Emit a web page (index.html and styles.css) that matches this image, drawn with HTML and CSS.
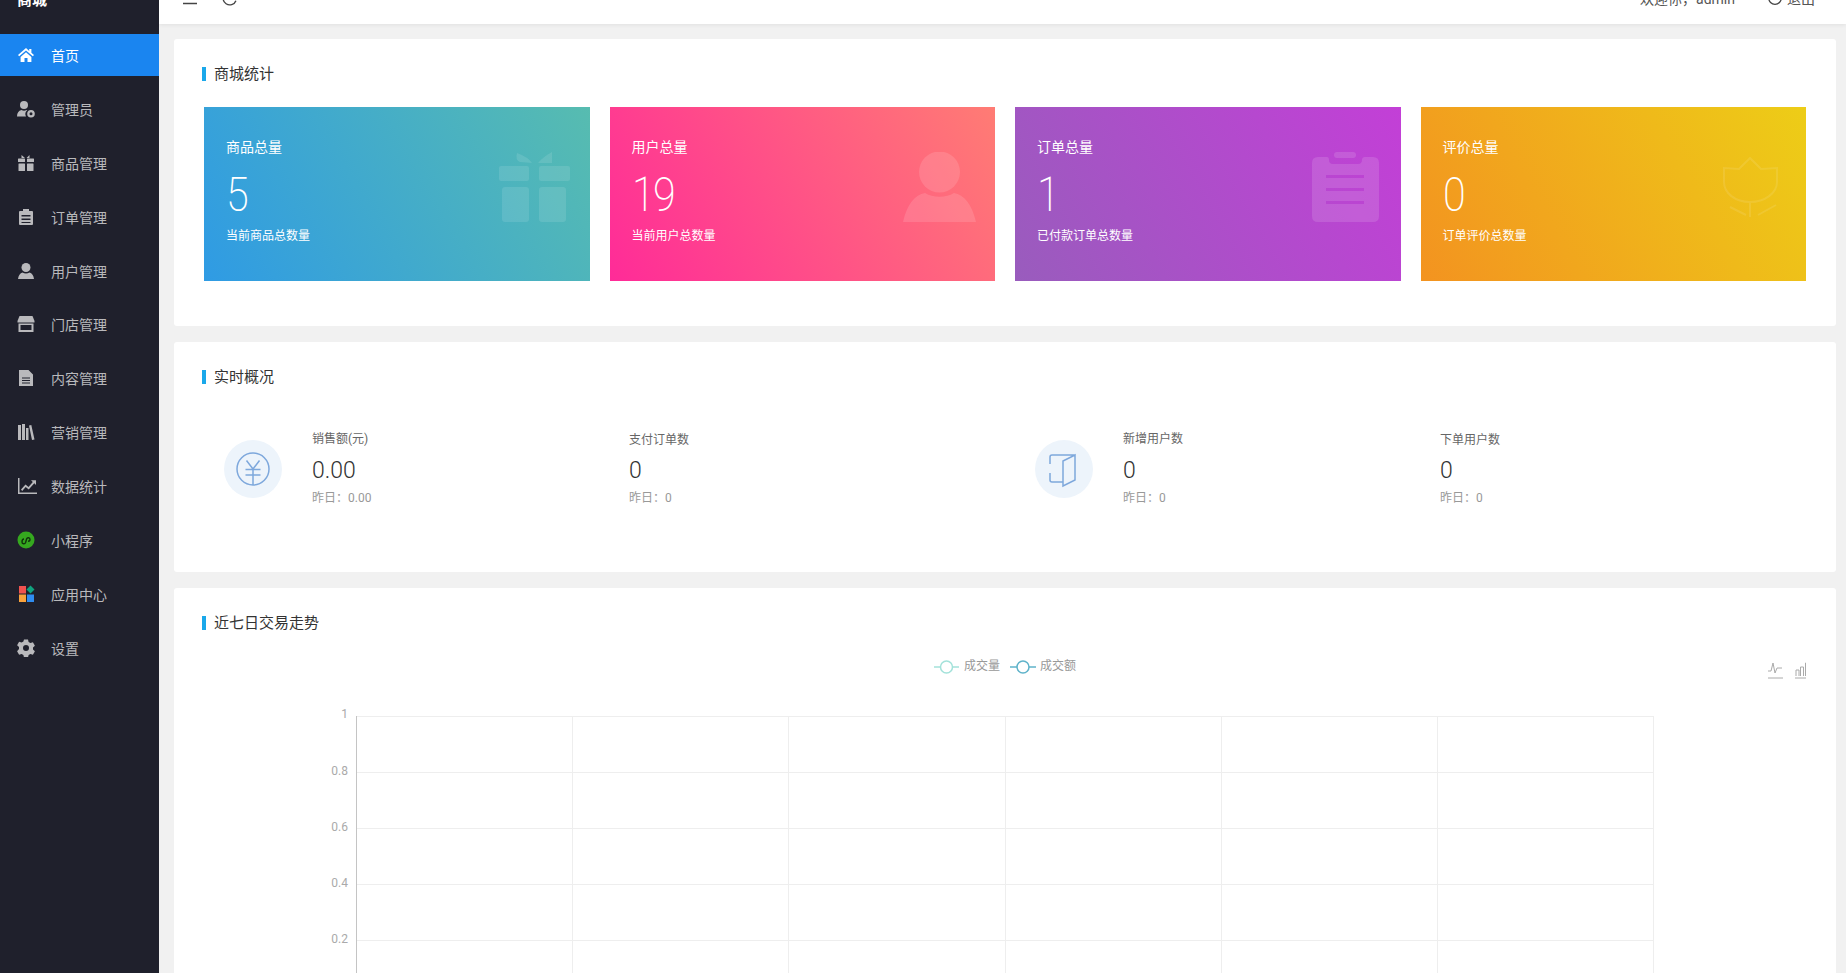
FILE: index.html
```html
<!DOCTYPE html>
<html lang="en">
<head>
  <meta charset="UTF-8">
  <meta name="viewport" content="width=device-width, initial-scale=1.0">
  <title>商城</title>
  <link rel="stylesheet" href="styles.css">
</head>
<body>
  <div class="layout">
    <!-- 侧边栏 -->
    <aside class="sidebar">
      <div class="logo">商城</div>
      <ul class="menu">
        <li class="active">
          <span class="menu-icon"><svg width="18" height="18" viewBox="0 0 18 18"><path d="M9 2 1 9l1.2 1.3L9 4.5l6.8 5.8L17 9l-2.6-2.2V3h-2.2v1.9z"/><path d="M3.6 11 9 6.3l5.4 4.7V16h-3.9v-4h-3v4H3.6z"/></svg></span>
          首页
        </li>
        <li>
          <span class="menu-icon"><svg width="18" height="18" viewBox="0 0 18 18"><circle cx="7" cy="5" r="4"/><path d="M0 16.500c0-3.500 1.500-6 4.500-6.500 1.500 1 3.500 1 5 0l.8.300A5 5 0 0 0 9 16.500z"/><path fill-rule="evenodd" d="M14 10a3.800 3.800 0 1 1 0 7.600 3.800 3.800 0 0 1 0-7.600zm0 2.300a1.500 1.500 0 1 0 0 3 1.500 1.500 0 0 0 0-3z"/></svg></span>
          管理员
        </li>
        <li>
          <span class="menu-icon"><svg width="18" height="18" viewBox="0 0 18 18"><path d="M4.500 1l3.500 3H4.500zM12.500 1L9.500 4h3z"/><rect x="1" y="4.500" width="7" height="3.500" rx=".5"/><rect x="10" y="4.500" width="7" height="3.500" rx=".5"/><rect x="1.500" y="9.500" width="6.500" height="7.500" rx=".5"/><rect x="10" y="9.500" width="6.500" height="7.500" rx=".5"/></svg></span>
          商品管理
        </li>
        <li>
          <span class="menu-icon"><svg width="18" height="18" viewBox="0 0 18 18"><path fill-rule="evenodd" d="M6 1h6v2h3a1 1 0 0 1 1 1v12a1 1 0 0 1-1 1H3a1 1 0 0 1-1-1V4a1 1 0 0 1 1-1h3zM4.500 7v1.500h9V7zm0 3.500V12h9v-1.500zm0 3.500v1h9v-1z"/></svg></span>
          订单管理
        </li>
        <li>
          <span class="menu-icon"><svg width="18" height="18" viewBox="0 0 18 18"><circle cx="9" cy="5.500" r="4.500"/><path d="M1 17c.5-3.500 2-6 4.500-6.500 2 1.300 5 1.300 7 0C15 11 16.500 13.500 17 17z"/></svg></span>
          用户管理
        </li>
        <li>
          <span class="menu-icon"><svg width="18" height="18" viewBox="0 0 18 18"><path d="M2.500 1h13l2 5v1.500H.5V6z"/><path fill-rule="evenodd" d="M1.500 8.500h15V17h-15zm2 1.500v5h11v-5z"/></svg></span>
          门店管理
        </li>
        <li>
          <span class="menu-icon"><svg width="18" height="18" viewBox="0 0 18 18"><path fill-rule="evenodd" d="M2 1h9.500L16 5.500V17H2zM5 8.500v1h8v-1zm0 2.500v1h8v-1zm0 2.500v1h8v-1z"/></svg></span>
          内容管理
        </li>
        <li>
          <span class="menu-icon"><svg width="18" height="18" viewBox="0 0 18 18"><path d="M1 2h3v15H1zM5 1h3v16H5zM9 5h2.500v12H9zM12 2.500l2.300-.5L17.500 16.500l-2.500.5z"/></svg></span>
          营销管理
        </li>
        <li>
          <span class="menu-icon icon-wide"><svg width="20" height="18" viewBox="0 0 20 18"><path d="M1 1h1.500v14.500H20V17H1z"/><path d="M4 12.500l4.500-5 3 2.500 4.300-5-1.800-1.700H19V8l-1.700-1.700-5.600 6.200-3-2.500-3.500 4z"/></svg></span>
          数据统计
        </li>
        <li>
          <span class="menu-icon"><svg width="18" height="18" viewBox="0 0 18 18"><circle class="mini-bg" cx="9" cy="9" r="8.500"/><path class="mini-link" d="M5 11c0 2 2.800 2.500 3.600.500l1-3.500c.6-2 3.400-1.500 3.400.5 0 1.200-1 1.800-2 1.800M7 8c-1 0-2 .8-2 3"/></svg></span>
          小程序
        </li>
        <li>
          <span class="menu-icon"><svg width="18" height="18" viewBox="0 0 18 18"><rect class="app-red" x="2" y="1" width="7" height="7.500"/><path class="app-green" d="M13.500.5 17.500 4.500 13.500 8.500 9.500 4.500z"/><rect class="app-orange" x="2" y="9.500" width="7" height="7.500"/><rect class="app-blue" x="10" y="9.500" width="7" height="7.500"/></svg></span>
          应用中心
        </li>
        <li>
          <span class="menu-icon"><svg width="18" height="18" viewBox="0 0 18 18"><path fill-rule="evenodd" d="M7 .5h4l.6 2.500 1.800 1 2.500-.8 2 3.500-1.900 1.800v2l1.900 1.800-2 3.500-2.500-.8-1.800 1-.6 2.500H7l-.6-2.500-1.800-1-2.500.8-2-3.500L2 10V8L.1 6.200l2-3.500 2.500.8 1.800-1zM9 6a3 3 0 1 0 0 6 3 3 0 0 0 0-6z"/></svg></span>
          设置
        </li>
      </ul>
    </aside>

    <div class="main">
      <header class="topbar">
        <div class="topbar-tools">
          <svg class="tool" width="14" height="14" viewBox="0 0 14 14"><path d="M0 1.500h14M0 7h14M0 12.500h14"/></svg>
          <svg class="tool" width="15" height="15" viewBox="0 0 14 14"><path d="M12.500 3.500A6.200 6.200 0 1 0 13 9"/></svg>
        </div>
        <div class="topbar-user">
          <span>欢迎你，admin</span>
          <span class="logout">
            <svg class="tool" width="14" height="14" viewBox="0 0 14 14"><circle cx="7" cy="7" r="6.300"/></svg>
            退出
          </span>
        </div>
      </header>

      <div class="content">
        <!-- 商城统计 -->
        <section class="card card-stats">
          <h3 class="card-title">商城统计</h3>
          <div class="stats">
            <div class="stat stat-blue">
              <p class="stat-label">商品总量</p>
              <p class="stat-num">5</p>
              <p class="stat-sub">当前商品总数量</p>
              <svg class="stat-bg gift" width="71" height="70" viewBox="0 0 71 70"><path d="M18 1q11 4 15 10L21 10q-5-2-3-9zM53 0q-9 5-14 11h14z"/><rect y="14" width="30" height="15" rx="2"/><rect x="40" y="14" width="31" height="15" rx="2"/><rect x="3" y="35" width="27" height="35" rx="3"/><rect x="40" y="35" width="27" height="35" rx="3"/></svg>
            </div>
            <div class="stat stat-pink">
              <p class="stat-label">用户总量</p>
              <p class="stat-num">19</p>
              <p class="stat-sub">当前用户总数量</p>
              <svg class="stat-bg person" width="73" height="70" viewBox="0 0 73 70"><circle cx="36.500" cy="20" r="20.500"/><path d="M0 70C4 52 12 43 22 41c8 5 21 5 29 0 10 2 18 11 22 29z"/></svg>
            </div>
            <div class="stat stat-purple">
              <p class="stat-label">订单总量</p>
              <p class="stat-num">1</p>
              <p class="stat-sub">已付款订单总数量</p>
              <svg class="stat-bg clip" width="67" height="70" viewBox="0 0 67 70"><rect x="22" width="22" height="6" rx="3"/><path fill-rule="evenodd" d="M6 5h9q2 0 2 3 0 4 4 4h25q4 0 4-4 0-3 3-3h8q6 0 6 6v53q0 6-6 6H6q-6 0-6-6V11q0-6 6-6zM14 23v3h38v-3zm0 13v3h38v-3zm0 13v3h38v-3z"/></svg>
            </div>
            <div class="stat stat-yellow">
              <p class="stat-label">评价总量</p>
              <p class="stat-num">0</p>
              <p class="stat-sub">订单评价总数量</p>
              <svg class="stat-bg tulip" width="55" height="60" viewBox="0 0 55 60"><path d="M27 1l11 11 16-1v14c0 11-12 20-27 20S1 36 1 25V11l15 1zM27 45v15M7 50l16 8M53 48l-18 10"/></svg>
            </div>
          </div>
        </section>

        <!-- 实时概况 -->
        <section class="card card-realtime">
          <h3 class="card-title">实时概况</h3>
          <div class="realtime">
            <div class="rt-group">
              <svg class="rt-icon" width="58" height="58" viewBox="0 0 58 58"><circle class="rt-circle" cx="29" cy="29" r="29"/><circle cx="29" cy="29" r="16"/><path d="M22.500 20.500 29 29l6.500-8.500M21.500 29.500h15M21.500 35h15M29 29v16"/></svg>
              <div class="rt-item rt-first">
                <p class="rt-label">销售额(元)</p>
                <p class="rt-value">0.00</p>
                <p class="rt-yest">昨日：0.00</p>
              </div>
              <div class="rt-item">
                <p class="rt-label">支付订单数</p>
                <p class="rt-value">0</p>
                <p class="rt-yest">昨日：0</p>
              </div>
            </div>
            <div class="rt-group">
              <svg class="rt-icon" width="58" height="58" viewBox="0 0 58 58"><circle class="rt-circle" cx="29" cy="29" r="29"/><path d="M40 15H17q-2 0-2 2v7M15 33v7q0 2 2 2h11M28 21l12-6v25l-12 6z"/></svg>
              <div class="rt-item rt-first">
                <p class="rt-label">新增用户数</p>
                <p class="rt-value">0</p>
                <p class="rt-yest">昨日：0</p>
              </div>
              <div class="rt-item">
                <p class="rt-label">下单用户数</p>
                <p class="rt-value">0</p>
                <p class="rt-yest">昨日：0</p>
              </div>
            </div>
          </div>
        </section>

        <!-- 近七日交易走势 -->
        <section class="card card-chart">
          <h3 class="card-title">近七日交易走势</h3>
          <svg class="chart" width="1602" height="340" viewBox="0 0 1602 340">
            <path class="legend-a" d="M730 11h25"/>
            <circle class="legend-a legend-dot" cx="742.500" cy="11" r="6"/>
            <text class="legend-text" x="760" y="14">成交量</text>
            <path class="legend-b" d="M806 11h26"/>
            <circle class="legend-b legend-dot" cx="819" cy="11" r="6"/>
            <text class="legend-text" x="836" y="14">成交额</text>

            <path class="toolbox" d="M1564 22h15M1564 15h3l2-8 2 10 2-5h5"/>
            <path class="toolbox" d="M1591 22h15M1592 20v-6h3v6M1596.500 20V11h3v9M1601.500 20V7h3v13"/>

            <path class="grid" d="M152 60.500h1298M152 116.500h1298M152 172.500h1298M152 228.500h1298M152 284.500h1298"/>
            <path class="grid" d="M368.500 60v280M584.500 60v280M801.500 60v280M1017.500 60v280M1233.500 60v280M1449.500 60v280"/>
            <path class="axis" d="M152.500 60v280"/>

            <text class="tick" x="144" y="62">1</text>
            <text class="tick" x="144" y="119">0.8</text>
            <text class="tick" x="144" y="175">0.6</text>
            <text class="tick" x="144" y="231">0.4</text>
            <text class="tick" x="144" y="287">0.2</text>
          </svg>
        </section>
      </div>
    </div>
  </div>
</body>
</html>
```

FILE: styles.css
```css
*{
  margin: 0;
  padding: 0;
  box-sizing: border-box;
}
html, body{
  height: 100%;
  overflow: hidden;
}
body{
  background: #f1f1f1;
  font-family: Roboto, "Noto Sans CJK SC", sans-serif;
  font-size: 14px;
  color: #333333;
}
/* 截图时页面已向下滚动了一点 */
.layout{
  display: flex;
  margin-top: -28px;
}

/* sidebar */
.sidebar{
  flex: 0 0 159px;
  min-height: 1100px;
  background: #1f202c;
}
.logo{
  height: 56px;
  line-height: 56px;
  padding-left: 17px;
  font-size: 15px;
  font-weight: 700;
  color: #ffffff;
}
.menu{
  margin-top: 6px;
  list-style: none;
}
.menu li{
  display: flex;
  align-items: center;
  height: 42px;
  margin-bottom: 11.9px;
  padding-left: 17px;
  color: #b9b9bc;
}
.menu li.active{
  background: #1a85f0;
  color: #ffffff;
}
.menu-icon{
  flex: 0 0 34px;
  display: flex;
}
.menu-icon svg{
  fill: currentColor;
}
.mini-bg{
  fill: #35a81f;
}
.menu-icon .mini-link{
  fill: none;
  stroke: #10330c;
  stroke-width: 1.4;
}
.menu-icon .app-red{
  fill: #f0524f;
}
.menu-icon .app-green{
  fill: #10a37f;
}
.menu-icon .app-orange{
  fill: #f9a23c;
}
.menu-icon .app-blue{
  fill: #2f8cf0;
}

/* main */
.main{
  flex: 1;
  min-width: 0;
}
.topbar{
  display: flex;
  justify-content: space-between;
  align-items: center;
  height: 52px;
  padding: 0 31px 0 24px;
  background: #ffffff;
  box-shadow: 0 1px 4px rgba(0, 0, 0, .07);
  color: #555555;
}
.topbar-tools{
  display: flex;
  gap: 25px;
}
.tool{
  fill: none;
  stroke: #444444;
  stroke-width: 1.3;
}
.topbar-user{
  display: flex;
  align-items: center;
  gap: 33px;
}
.logout{
  display: flex;
  align-items: center;
  gap: 5px;
}
.content{
  display: flex;
  flex-direction: column;
  gap: 16px;
  padding: 15px 10px 0 15px;
}
.card{
  background: #ffffff;
  border-radius: 3px;
  padding: 0 30px;
}
.card-stats{
  height: 287px;
}
.card-realtime{
  height: 230px;
}
.card-chart{
  height: 500px;
}
.card-title{
  display: flex;
  align-items: center;
  gap: 8px;
  height: 68px;
  margin-left: -2px;
  padding-bottom: 2px;
  font-size: 15px;
  font-weight: 400;
  color: #333333;
}
.card-title::before{
  content: "";
  position: relative;
  top: 2px;
  width: 4px;
  height: 14px;
  background: #1aa8ea;
}

/* stat cards */
.stats{
  display: grid;
  grid-template-columns: repeat(4, 1fr);
  gap: 20px;
}
.stat{
  position: relative;
  height: 174px;
  padding: 30px 22px 0;
  color: #ffffff;
}
.stat-blue{
  background: linear-gradient(60deg, #2f9be4, #57bcb0);
}
.stat-pink{
  background: linear-gradient(60deg, #ff2b98, #ff7c74);
}
.stat-purple{
  background: linear-gradient(60deg, #995cbd, #c33fd7);
}
.stat-yellow{
  background: linear-gradient(60deg, #f39320, #edcd17);
}
.stat-label{
  line-height: 20px;
}
/* 数字比 Roboto 窄一些 */
.stat-num{
  margin-top: 14px;
  font-size: 48px;
  line-height: 48px;
  font-weight: 200;
  letter-spacing: -2px;
  transform: scaleX(.86);
  transform-origin: left;
}
.stat-sub{
  margin-top: 8px;
  font-size: 12px;
  line-height: 18px;
}
.stat-bg{
  position: absolute;
  top: 45px;
  fill: rgba(255, 255, 255, .13);
}
.gift{
  right: 20px;
  fill: rgba(255, 255, 255, .11);
}
.person{
  right: 19px;
}
.clip{
  right: 22px;
}
.tulip{
  top: 50px;
  right: 28px;
  fill: none;
  stroke: rgba(255, 255, 255, .1);
  stroke-width: 2;
}

/* realtime */
.realtime{
  display: grid;
  grid-template-columns: 811px 1fr;
  margin: 20px 0 0 20px;
}
.rt-group{
  display: grid;
  grid-template-columns: 88px 317px 1fr;
  align-items: center;
}
.rt-circle{
  fill: #edf4fb;
  stroke: none;
}
.rt-icon{
  fill: none;
  stroke: #7ea8dc;
  stroke-width: 1.5;
}
.rt-label{
  font-size: 12px;
  line-height: 18px;
  color: #666666;
}
.rt-value{
  margin-top: 7px;
  font-size: 23px;
  line-height: 30px;
  font-weight: 300;
  color: #333333;
}
.rt-yest{
  margin-top: 3px;
  font-size: 12px;
  line-height: 18px;
  color: #999999;
}
.rt-first .rt-value{
  margin-top: 8px;
}

/* chart */
.chart{
  display: block;
  font-family: Roboto, "Noto Sans CJK SC", sans-serif;
  font-size: 12px;
}
.legend-a{
  stroke: #a3e2da;
  stroke-width: 1.5;
  fill: none;
}
.legend-b{
  stroke: #5fb3ca;
  stroke-width: 1.5;
  fill: none;
}
.legend-dot{
  fill: #ffffff;
}
.legend-text{
  fill: #999999;
}
.toolbox{
  fill: none;
  stroke: #aaaaaa;
  stroke-width: 1;
}
.grid{
  fill: none;
  stroke: #eeeeee;
  stroke-width: 1;
}
.axis{
  fill: none;
  stroke: #c4c4c4;
  stroke-width: 1;
}
.tick{
  fill: #aaaaaa;
  text-anchor: end;
}
```
